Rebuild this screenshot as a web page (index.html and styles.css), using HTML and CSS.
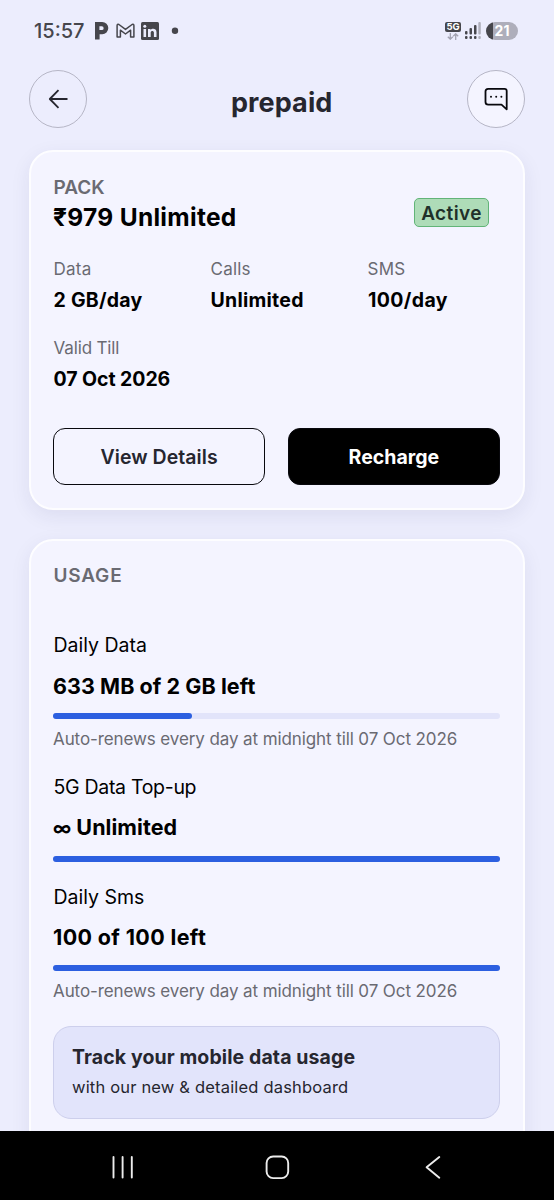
FILE: index.html
```html
<!DOCTYPE html>
<html lang="en">
<head>
<meta charset="utf-8">
<title>prepaid</title>
<link rel="stylesheet" href="styles.css">
</head>
<body>
<div class="screen">
  <div class="status">
    <span class="clock">15:57</span>
    <svg class="notif" width="86" height="20" viewBox="0 0 86 20">
      <path fill="#46464c" fill-rule="evenodd" d="M1 1h7.200a5.700 5.700 0 0 1 0 12.200H5.600V18.500H1zM5.400 5.300V9h2.400a1.850 1.850 0 0 0 0-3.700z"/>
      <path fill="none" stroke="#46464c" stroke-width="1.500" stroke-linejoin="round" d="M23.100 15.900V4.600q0-1.800 1.800-1.100L31.500 8.400l6.600-4.900q1.800-.7 1.800 1.100v11.300h-3.300V9.200L31.500 13 26.400 9.200v6.700z"/>
      <rect x="47" y="1" width="18" height="18" rx="1.500" fill="#46464c"/>
      <path fill="#ecedfd" d="M49.500 8h2.600v8h-2.600zM54 8h2.500v1.100c1.300-2 6-2 6 2.100V16h-2.600v-4.400c0-2.100-3.200-2.100-3.200 0V16H54z"/>
      <circle cx="50.800" cy="5.300" r="1.500" fill="#ecedfd"/>
      <circle cx="81" cy="9.800" r="3.200" fill="#46464c"/>
    </svg>
    <div class="signals">
      <div class="net"><span class="fiveg">5G</span>
        <svg width="12" height="7" viewBox="0 0 12 7"><path d="M3.300 0v6M.8 3.700l2.500 2.500 2.500-2.500M8.700 7V1M6.200 3.300L8.700.8l2.500 2.500" fill="none" stroke="#a3a3b1" stroke-width="1.300"/></svg>
      </div>
      <svg width="17" height="19" viewBox="0 0 17 19"><g fill="#46464c"><rect x="1" y="10" width="2.500" height="3.500" rx="1"/><rect x="5.500" y="7" width="2.500" height="6.500" rx="1"/><rect x="10" y="4" width="2.500" height="9.500" rx="1"/><rect x="1" y="15" width="2.500" height="3" rx="1"/><rect x="5.500" y="15" width="2.500" height="3" rx="1"/><rect x="10" y="15" width="2.500" height="3" rx="1"/></g><g fill="#b0b0bc"><rect x="14.300" y="1" width="2.500" height="12.500" rx="1"/><rect x="14.300" y="15" width="2.500" height="3" rx="1"/></g></svg>
      <span class="battery">21</span>
    </div>
  </div>

  <header class="topbar">
    <button class="round"><svg width="20" height="20" viewBox="0 0 20 20"><path d="M10.500 1.200L1.800 10l8.700 8.800M1.800 10H19.500" fill="none" stroke="#26262f" stroke-width="1.800" stroke-linejoin="round"/></svg></button>
    <h1>prepaid</h1>
    <button class="round chat"><svg width="24" height="24" viewBox="0 0 24 24"><path d="M4.200 1.800h16.300q2.200 0 2.200 2.200v18.300L17.500 17.700H4.200q-2.700 0-2.700-2.700V4.500q0-2.700 2.700-2.700z" fill="none" stroke="#08080d" stroke-width="1.800" stroke-linejoin="round"/><g fill="#08080d"><circle cx="7" cy="9.800" r="1"/><circle cx="12.200" cy="9.800" r="1"/><circle cx="17.400" cy="9.800" r="1"/></g></svg></button>
  </header>

  <section class="card pack">
    <div class="pack-head">
      <div>
        <div class="section">PACK</div>
        <h2>₹979 Unlimited</h2>
      </div>
      <span class="badge">Active</span>
    </div>
    <div class="facts">
      <div><div class="key">Data</div><div class="fact">2 GB/day</div></div>
      <div><div class="key">Calls</div><div class="fact">Unlimited</div></div>
      <div><div class="key">SMS</div><div class="fact wide">100/day</div></div>
      <div><div class="key tight">Valid Till</div><div class="fact date">07 Oct 2026</div></div>
    </div>
    <div class="actions">
      <button class="btn">View Details</button>
      <button class="btn solid">Recharge</button>
    </div>
  </section>

  <section class="card usage">
    <div class="section spaced">USAGE</div>
    <div class="meters">
      <div class="meter">
        <div class="name">Daily Data</div>
        <div class="amount">633 MB of 2 GB left</div>
        <div class="track"><div class="fill" style="width:31%"></div></div>
        <div class="note">Auto-renews every day at midnight till 07 Oct 2026</div>
      </div>
      <div class="meter">
        <div class="name topup">5G Data Top-up</div>
        <div class="amount"><span class="infinity">∞</span> Unlimited</div>
        <div class="track"><div class="fill" style="width:100%"></div></div>
      </div>
      <div class="meter">
        <div class="name">Daily Sms</div>
        <div class="amount wide">100 of 100 left</div>
        <div class="track"><div class="fill" style="width:100%"></div></div>
        <div class="note">Auto-renews every day at midnight till 07 Oct 2026</div>
      </div>
    </div>
    <div class="banner">
      <div class="banner-title">Track your mobile data usage</div>
      <div class="banner-text">with our new &amp; detailed dashboard</div>
    </div>
  </section>

  <nav class="nav">
    <svg width="554" height="69" viewBox="0 0 554 69" fill="none" stroke="#ececec" stroke-width="1.900" stroke-linecap="round" stroke-linejoin="round"><path d="M113.500 26v20.500M122.600 26v20.500M131.800 26v20.500"/><rect x="266.600" y="25.500" width="21.600" height="21.600" rx="6.500"/><path d="M439.300 26L426.600 36.200l12.700 10.500"/></svg>
  </nav>
</div>
</body>
</html>
```
FILE: styles.css
```css
* { box-sizing: border-box; }
body { margin: 0; font-family: Inter, "Noto Sans", sans-serif; background: #ecedfd; color: #000; }
.screen { width: 554px; height: 1200px; overflow: hidden; display: flex; flex-direction: column; }
.status { height: 70px; flex: none; padding: 0 36px 9px 34px; display: flex; align-items: center; color: #46464c; }
.clock { font-size: 20px; font-weight: 500; width: 60px; }
.notif { display: block; }
.signals { margin-left: auto; display: flex; align-items: center; gap: 3px; }
.net { display: flex; flex-direction: column; align-items: center; gap: 1px; }
.fiveg { width: 16px; height: 10px; border-radius: 2px; background: #46464c; color: #fff; font-size: 9.500px; line-height: 10px; font-weight: 700; text-align: center; }
.battery { margin-left: 2px; width: 32px; height: 18px; border-radius: 9px; background: linear-gradient(90deg, #46464c 7px, #aeaebb 7px); color: #fff; font-size: 14px; line-height: 18px; font-weight: 700; text-align: center; }
.topbar { height: 58px; flex: none; padding: 0 29px; display: flex; align-items: center; justify-content: space-between; }
.round { width: 58px; height: 58px; padding: 0; border: 1.500px solid #b6b6c6; border-radius: 50%; background: transparent; display: flex; align-items: center; justify-content: center; }
.chat { background: #f4f4ff; }
h1 { margin: 0; padding: 7px 0 0 9px; width: 110px; font-size: 27px; line-height: 36px; font-weight: 700; color: #26262f; letter-spacing: .1px; text-align: center; }
.card { flex: none; margin: 0 29px; border: 2px solid #fdfdff; border-radius: 24px; background: #f4f4ff; box-shadow: 0 6px 20px rgba(40, 40, 90, .08); }
.pack { margin-top: 22px; height: 360px; padding: 24px 23px 22px 22px; }
.usage { margin-top: 29px; height: 640px; padding: 22.500px 23px 22.500px 22px; }
.section { padding-left: .500px; font-size: 19px; line-height: 24px; font-weight: 600; color: #6a6a72; }
.spaced { letter-spacing: .8px; }
.pack-head { display: flex; justify-content: space-between; align-items: flex-end; }
h2 { margin: 0; font-size: 24.500px; line-height: 34px; font-weight: 700; letter-spacing: .3px; }
.badge { width: 75px; height: 29px; margin: 0 11px 7px 0; border: 1px solid #62b478; border-radius: 5px; background: #aedcb8; color: #20302a; font-size: 19px; line-height: 29px; font-weight: 600; letter-spacing: .4px; text-align: center; }
.facts { margin-top: 24px; display: grid; grid-template-columns: repeat(3, 157px); row-gap: 17.500px; }
.key { padding-left: .600px; font-size: 17px; line-height: 23px; letter-spacing: .2px; color: #6a6a72; }
.key.tight { letter-spacing: -.15px; }
.fact { padding-left: .500px; font-size: 19.500px; line-height: 38px; font-weight: 700; letter-spacing: .25px; }
.fact.wide { padding-left: 1px; letter-spacing: .38px; }
.fact.date { letter-spacing: -.06px; }
.actions { margin-top: 30.500px; display: flex; gap: 22.500px; }
.btn { flex: 1; height: 57px; padding: 0; border: 1.500px solid #08080d; border-radius: 12px; background: transparent; font: 600 19.500px/24px Inter, sans-serif; letter-spacing: .05px; color: #26262f; }
.solid { background: #000; color: #fff; font-weight: 700; letter-spacing: 0; }
.meters { margin-top: 42.500px; display: flex; flex-direction: column; gap: 20.500px; }
.name { padding-left: .500px; font-size: 19.500px; line-height: 30px; }
.name.topup { letter-spacing: -.3px; }
.amount { margin-top: 7.500px; font-size: 21.500px; line-height: 36px; font-weight: 700; letter-spacing: .06px; }
.amount.wide { letter-spacing: .36px; }
.infinity { font-size: 18.500px; }
.track { margin-top: 9.500px; height: 6px; border-radius: 3px; background: #e2e4fa; }
.fill { height: 6px; border-radius: 3px; background: #2c5fe0; }
.note { margin-top: 8px; padding-bottom: .500px; font-size: 17px; line-height: 24px; letter-spacing: -.1px; color: #6a6a72; }
.meter + .meter { margin-top: -.500px; }
.banner { margin-top: 22.500px; height: 93px; padding: 16px 18px; border: 1.500px solid #cdcfec; border-radius: 18px; background: #e2e4fb; color: #26262f; }
.banner-title { font-size: 19.500px; line-height: 28px; font-weight: 700; letter-spacing: .1px; }
.banner-text { font-size: 16.500px; line-height: 32px; letter-spacing: .18px; }
.nav { position: absolute; left: 0; top: 1131px; height: 69px; background: #000; }
.nav svg { display: block; }
```
